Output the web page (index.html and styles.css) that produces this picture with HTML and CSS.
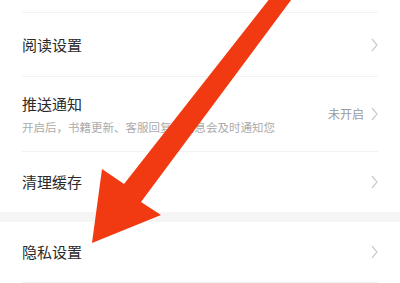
FILE: index.html
```html
<!DOCTYPE html>
<html lang="zh-CN">
<head>
<meta charset="utf-8">
<link rel="stylesheet" href="styles.css">
</head>
<body>
<div class="page">
  <div class="group">
    <div class="row prev"></div>
    <div class="row r1">
      <span class="title">阅读设置</span>
      <svg class="chev" viewBox="0 0 7 14"><polyline points="1,1 6,7 1,13"/></svg>
    </div>
    <div class="row r2">
      <div class="texts">
        <span class="title">推送通知</span>
        <span class="sub">开启后，书籍更新、客服回复等消息会及时通知您</span>
      </div>
      <div class="right">
        <span class="status">未开启</span>
        <svg class="chev" viewBox="0 0 7 14"><polyline points="1,1 6,7 1,13"/></svg>
      </div>
    </div>
    <div class="row r3 last">
      <span class="title">清理缓存</span>
      <svg class="chev" viewBox="0 0 7 14"><polyline points="1,1 6,7 1,13"/></svg>
    </div>
  </div>
  <div class="band"></div>
  <div class="group">
    <div class="row r4">
      <span class="title">隐私设置</span>
      <svg class="chev" viewBox="0 0 7 14"><polyline points="1,1 6,7 1,13"/></svg>
    </div>
  </div>
  <svg class="arrow" viewBox="0 0 400 283">
    <polygon points="278,-12 300,-12 141,202 161,215 92,243 102,169 124,184"/>
  </svg>
</div>
</body>
</html>
```
FILE: styles.css
```css
html, body {
  margin: 0;
  padding: 0;
  background: #ffffff;
}
.page {
  position: relative;
  width: 400px;
  height: 283px;
  overflow: hidden;
  font-family: "Noto Sans CJK SC", "Noto Sans", sans-serif;
  background: #ffffff;
}
.group {
  display: flex;
  flex-direction: column;
}
.row {
  margin: 0 22px;
  border-bottom: 1px solid #f2f2f2;
  display: flex;
  align-items: center;
  justify-content: space-between;
  box-sizing: border-box;
}
.row.last {
  border-bottom: none;
}
.prev { height: 13px; }
.r1 { height: 64px; }
.r2 { height: 75px; }
.r3 { height: 60px; }
.r4 { height: 61px; }
.title {
  font-size: 15px;
  line-height: 20px;
  color: #2a2a2a;
}
.texts {
  display: flex;
  flex-direction: column;
}
.sub {
  margin-top: 5px;
  font-size: 11.5px;
  line-height: 16px;
  color: #ababab;
  white-space: nowrap;
}
.right {
  display: flex;
  align-items: center;
  gap: 7px;
}
.status {
  font-size: 12px;
  line-height: 16px;
  color: #999999;
}
.chev {
  width: 7px;
  height: 14px;
  flex: none;
}
.chev polyline {
  fill: none;
  stroke: #cccccc;
  stroke-width: 1.2;
}
.band {
  height: 10px;
  background: #f5f5f5;
}
.arrow {
  position: absolute;
  left: 0;
  top: 0;
  width: 400px;
  height: 283px;
}
.arrow polygon {
  fill: #f23a12;
}
```
